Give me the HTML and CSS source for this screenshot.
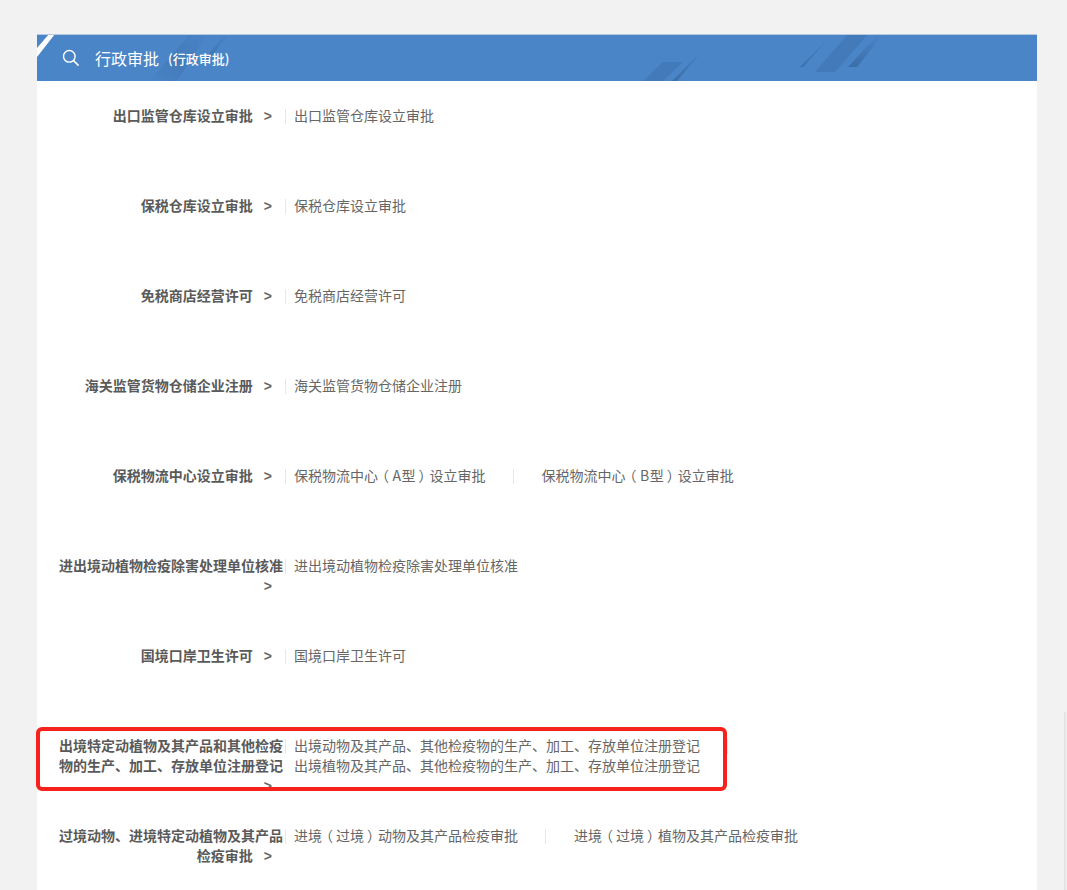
FILE: index.html
```html
<!DOCTYPE html>
<html lang="zh-CN">
<head>
<meta charset="utf-8">
<title>行政审批</title>
<link rel="stylesheet" href="styles.css">
</head>
<body>
<main class="card">
  <header class="head">
    <svg class="head-art" width="1000" height="46" viewBox="0 0 1000 46" aria-hidden="true">
      <defs>
        <linearGradient id="fade" x1="0" y1="1" x2="0" y2="0">
          <stop offset="0" stop-color="#3b6fa8"/>
          <stop offset="1" stop-color="#4a85c8"/>
        </linearGradient>
        <linearGradient id="band" x1="0" y1="1" x2="1" y2="0">
          <stop offset="0" stop-color="#4a85c8"/>
          <stop offset="0.45" stop-color="#437ab9"/>
          <stop offset="1" stop-color="#4a85c8"/>
        </linearGradient>
      </defs>
      <polygon points="0,13 12,-1 18,-1 0,22" fill="#ffffff"/>
      <polygon points="113,46 140,46 170,-1 153,-1" fill="url(#band)"/>
      <polygon points="165,28 169,28 192,-1 188,-1" fill="url(#fade)"/>
      <polygon points="606,46 626,27 646,27 626,46" fill="#437ab9"/>
      <polygon points="635,46 640,46 668,13" fill="url(#fade)"/>
      <polygon points="763,32 766,32 796,-1" fill="url(#fade)"/>
      <polygon points="778,37 798,37 831,-1 811,-1" fill="#437ab9"/>
      <polygon points="811,32 820,32 846,-1 841,-1" fill="url(#fade)"/>
    </svg>
    <svg class="search" width="18" height="18" viewBox="0 0 18 18" aria-hidden="true">
      <circle cx="7.3" cy="7.3" r="5.8" fill="none" stroke="#fff" stroke-width="1.4"/>
      <line x1="11.6" y1="11.6" x2="16.6" y2="16.6" stroke="#fff" stroke-width="1.5"/>
    </svg>
    <h1 class="title">行政审批</h1>
    <span class="subtitle">(行政审批)</span>
  </header>
  <section class="rows">
    <div class="row">
      <div class="name">出口监管仓库设立审批<span class="arrow">&gt;</span></div><i class="rule"></i>
      <div class="items"><a class="item">出口监管仓库设立审批</a></div>
    </div>
    <div class="row">
      <div class="name">保税仓库设立审批<span class="arrow">&gt;</span></div><i class="rule"></i>
      <div class="items"><a class="item">保税仓库设立审批</a></div>
    </div>
    <div class="row">
      <div class="name">免税商店经营许可<span class="arrow">&gt;</span></div><i class="rule"></i>
      <div class="items"><a class="item">免税商店经营许可</a></div>
    </div>
    <div class="row">
      <div class="name">海关监管货物仓储企业注册<span class="arrow">&gt;</span></div><i class="rule"></i>
      <div class="items"><a class="item">海关监管货物仓储企业注册</a></div>
    </div>
    <div class="row">
      <div class="name">保税物流中心设立审批<span class="arrow">&gt;</span></div><i class="rule"></i>
      <div class="items"><a class="item">保税物流中心<span class="paren">（</span><span class="lat">A</span>型<span class="paren">）</span>设立审批</a><i class="rule gap"></i><a class="item">保税物流中心<span class="paren">（</span><span class="lat">B</span>型<span class="paren">）</span>设立审批</a></div>
    </div>
    <div class="row">
      <div class="name">进出境动植物检疫除害处理单位核准<span class="arrow">&gt;</span></div><i class="rule"></i>
      <div class="items"><a class="item">进出境动植物检疫除害处理单位核准</a></div>
    </div>
    <div class="row">
      <div class="name">国境口岸卫生许可<span class="arrow">&gt;</span></div><i class="rule"></i>
      <div class="items"><a class="item">国境口岸卫生许可</a></div>
    </div>
    <div class="row">
      <div class="name">出境特定动植物及其产品和其他检疫物的生产、加工、存放单位注册登记<span class="arrow">&gt;</span></div><i class="rule"></i>
      <div class="items"><a class="item">出境动物及其产品、其他检疫物的生产、加工、存放单位注册登记</a><i class="rule gap"></i><a class="item">出境植物及其产品、其他检疫物的生产、加工、存放单位注册登记</a></div>
    </div>
    <div class="row">
      <div class="name">过境动物、进境特定动植物及其产品检疫审批<span class="arrow">&gt;</span></div><i class="rule"></i>
      <div class="items"><a class="item">进境<span class="paren">（</span>过境<span class="paren">）</span>动物及其产品检疫审批</a><i class="rule gap"></i><a class="item">进境<span class="paren">（</span>过境<span class="paren">）</span>植物及其产品检疫审批</a></div>
    </div>
  </section>
</main>
<div class="annotation"></div>
<div class="edge-shadow"></div>
</body>
</html>
```
FILE: styles.css
```css
html, body { margin: 0; padding: 0; height: 890px; overflow: hidden; }
body {
  background: #f2f2f2;
  font-family: "Noto Sans CJK SC", "Liberation Sans", sans-serif;
  font-size: 14px;
  color: #666;
  position: relative;
}
.card {
  width: 1000px;
  margin: 34px 0 0 37px;
  background: #fff;
  height: 856px;
  overflow: hidden;
}
.head {
  position: relative;
  height: 47px;
  box-sizing: border-box;
  background: #4a85c8;
  border-top: 1px solid #b5c9df;
  display: flex;
  align-items: center;
  color: #fff;
  padding-left: 25px;
}
.head-art { position: absolute; left: 0; top: 0; }
.search { position: relative; margin-right: 15px; }
.title { position: relative; margin: 0 9px 0 0; font-size: 16px; font-weight: 400; line-height: 22px; }
.subtitle { position: relative; font-size: 13px; font-weight: 500; line-height: 22px; padding-top: 2px; }
.rows { padding-top: 24px; }
.row { display: flex; height: 90px; line-height: 20px; }
.name {
  box-sizing: border-box;
  width: 246px;
  padding-left: 22px;
  text-align: right;
  font-weight: 700;
  color: #5a5a5a;
}
.arrow { display: inline-block; margin: 0 11px; font-weight: 700; font-family: "Liberation Sans", sans-serif; color: #666; }
.rule { display: block; flex: none; width: 1px; height: 15px; margin: 4px 0 0; background: #e8e6e6; }
.row > .rule { margin-left: 2px; margin-right: 8px; }
.items { flex: 1; display: flex; flex-wrap: wrap; align-content: flex-start; }
.item { color: #666; white-space: nowrap; }
.rule.gap { margin: 4px 28px 0 27px; }
.paren {
  display: inline-block;
  width: 14px;
  text-align: center;
  font-feature-settings: "palt";
}
.lat { padding: 0 0.5px; }
.annotation {
  position: absolute;
  left: 36px;
  top: 727px;
  width: 691px;
  height: 64px;
  box-sizing: border-box;
  border: 4px solid #f5231b;
  border-radius: 6px;
}
.edge-shadow {
  position: absolute;
  right: 0;
  top: 712px;
  width: 3px;
  height: 178px;
  background: linear-gradient(to right, #e0e0e0, #f0f0f0);
}
```
